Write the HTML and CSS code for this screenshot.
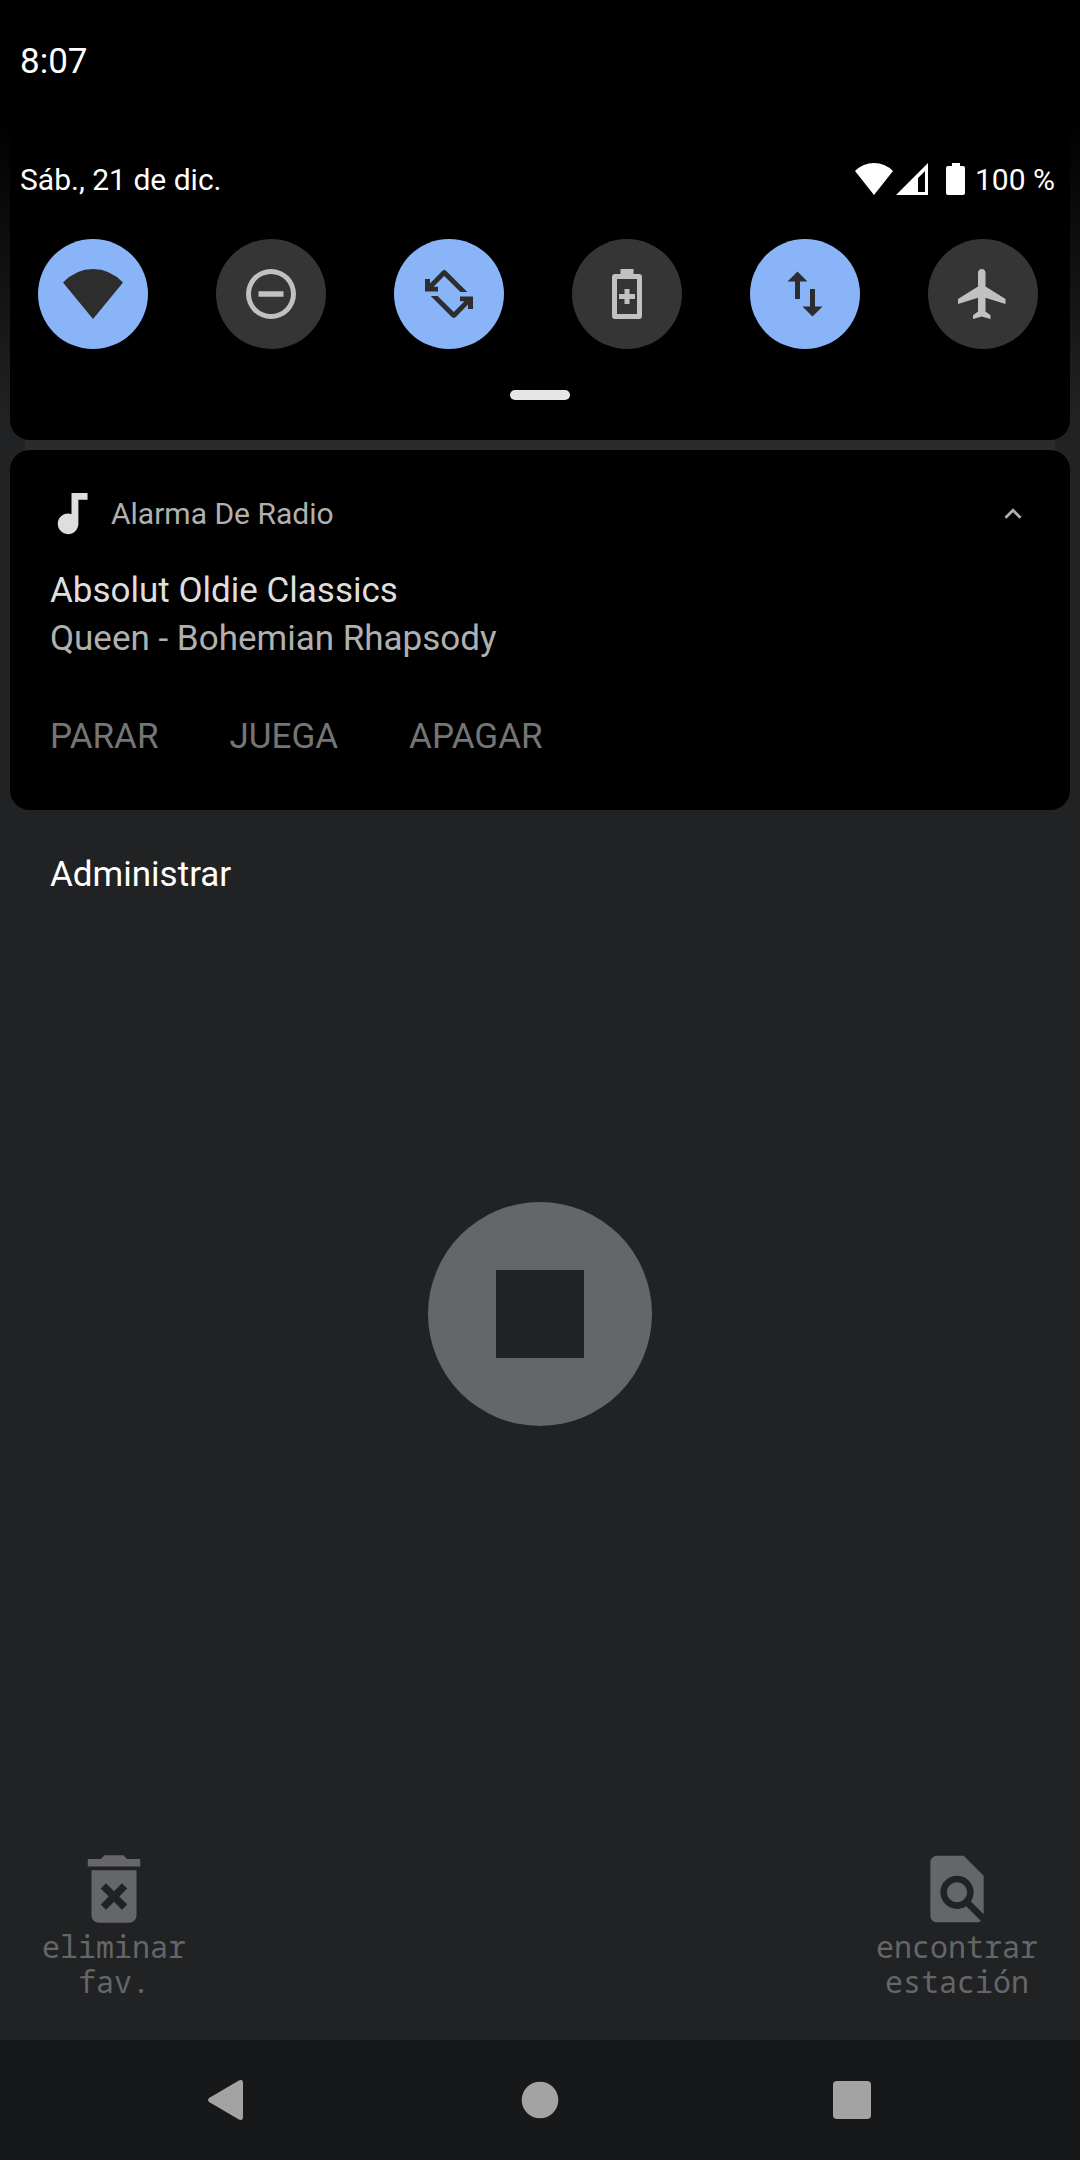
FILE: index.html
```html
<!DOCTYPE html>
<html lang="es">
<head>
<meta charset="utf-8">
<meta name="viewport" content="width=device-width, initial-scale=1">
<title>Alarma De Radio</title>
<link rel="stylesheet" href="styles.css">
</head>
<body>
<div class="screen">
  <header class="status-bar"><time class="clock">8:07</time></header>

  <section class="quick-settings" aria-label="Ajustes rápidos">
    <div class="quick-header">
      <time datetime="12-21">Sáb., 21 de dic.</time>
      <div class="system-icons">
        <svg class="status-wifi" viewBox="0 0 38 32" aria-hidden="true"><path d="M19 32 0 8Q8 0 19 0T38 8Z"/></svg>
        <svg class="status-signal" viewBox="0 0 32 32" aria-hidden="true"><path fill-rule="evenodd" d="M0 32 32 0V32ZM22 15V29H29V8Z"/></svg>
        <svg class="status-battery" viewBox="0 0 19 32" aria-hidden="true"><path d="M6 0h8v3h3q2 0 2 2v25q0 2-2 2H2q-2 0-2-2V5q0-2 2-2h4Z"/></svg>
        <span>100 %</span>
      </div>
    </div>
    <div class="tiles">
      <button class="tile tile-on" type="button" aria-label="Wi-Fi" aria-pressed="true">
        <svg viewBox="0 0 60 60"><path d="M30 55 0 18.500Q13 5 30 5T60 18.500Z"/></svg>
      </button>
      <button class="tile" type="button" aria-label="No molestar" aria-pressed="false">
        <svg viewBox="0 0 24 24"><path fill-rule="evenodd" d="M12 2a10 10 0 1 0 0 20 10 10 0 0 0 0-20Zm0 2a8 8 0 1 1 0 16 8 8 0 0 1 0-16ZM7 10.900h10v2.200H7Z"/></svg>
      </button>
      <button class="tile tile-on" type="button" aria-label="Girar automáticamente" aria-pressed="true">
        <svg viewBox="0 0 60 60"><path id="turn" d="M41.400 28 25.200 12 14.500 22.700H19V27.500H6V15H11V19.500L22.900 7.200Q25.200 5 27.500 7.200L48.300 28Z"/><use href="#turn" transform="rotate(180 30 30)"/></svg>
      </button>
      <button class="tile" type="button" aria-label="Ahorro de batería" aria-pressed="false">
        <svg viewBox="0 0 60 60"><path fill-rule="evenodd" d="M23.500 5h13v5H42q3 0 3 3v39q0 3-3 3H18q-3 0-3-3V13q0-3 3-3h5.500ZM20 15v35h20V15ZM27.500 25h5v5H38v5h-5.500v5h-5v-5H22v-5h5.500Z"/></svg>
      </button>
      <button class="tile tile-on" type="button" aria-label="Datos móviles" aria-pressed="true">
        <svg viewBox="0 0 60 60"><path d="M22.500 7.500 32.500 17.500H25V35H20V17.500H12.500ZM35 25h5v17.500h7.500l-10 10-10-10H35Z"/></svg>
      </button>
      <button class="tile" type="button" aria-label="Modo avión" aria-pressed="false">
        <svg viewBox="0 0 24 24"><path d="M21 16v-2l-8-5V3.500c0-.83-.67-1.500-1.500-1.500S10 2.670 10 3.500V9l-8 5v2l8-2.500V19l-2 1.500V22l3.500-1 3.500 1v-1.500L13 19v-5.500l8 2.500z"/></svg>
      </button>
    </div>
    <div class="handle"></div>
  </section>

  <div class="panel-gap"></div>

  <article class="notification">
    <div class="notification-header">
      <svg class="app-icon" viewBox="0 0 24 24" aria-hidden="true"><path d="M12 3v9.280c-.47-.17-.97-.28-1.500-.28C8.010 12 6 14.010 6 16.500S8.010 21 10.500 21c2.310 0 4.200-1.750 4.450-4H15V6h4V3h-7z"/></svg>
      <span class="app-name">Alarma De Radio</span>
      <button class="collapse" type="button" aria-label="Contraer">
        <svg viewBox="0 0 24 24"><path d="M12 8l-6 6 1.410 1.410L12 10.830l4.590 4.580L18 14z"/></svg>
      </button>
    </div>
    <h1 class="station">Absolut Oldie Classics</h1>
    <p class="song">Queen - Bohemian Rhapsody</p>
    <div class="actions">
      <button type="button">PARAR</button>
      <button type="button">JUEGA</button>
      <button type="button">APAGAR</button>
    </div>
  </article>

  <button class="manage" type="button">Administrar</button>

  <main class="player">
    <button class="stop" type="button" aria-label="Detener"><span class="stop-square"></span></button>
  </main>

  <div class="station-tools">
    <button class="tool" type="button">
      <svg class="icon-delete" viewBox="0 0 24 24" aria-hidden="true"><path fill-rule="evenodd" d="M6 19c0 1.100.9 2 2 2h8c1.100 0 2-.9 2-2V7H6v12zm2.460-7.120 1.410-1.410L12 12.590l2.120-2.120 1.410 1.410L13.410 14l2.120 2.120-1.410 1.410L12 15.410l-2.120 2.120-1.410-1.410L10.590 14l-2.130-2.120zM15.500 4l-1-1h-5l-1 1H5v2h14V4z"/></svg>
      <span>eliminar<br>fav.</span>
    </button>
    <button class="tool" type="button">
      <svg class="icon-find" viewBox="0 0 24 24" aria-hidden="true"><path d="M20 19.590V8l-6-6H6c-1.100 0-1.990.9-1.990 2L4 20c0 1.100.89 2 1.990 2H18c.45 0 .85-.15 1.190-.4l-4.430-4.430c-.8.520-1.740.830-2.760.830-2.760 0-5-2.240-5-5s2.240-5 5-5 5 2.240 5 5c0 1.020-.31 1.960-.83 2.750L20 19.590zM9 13c0 1.660 1.340 3 3 3s3-1.340 3-3-1.340-3-3-3-3 1.340-3 3z"/></svg>
      <span>encontrar<br>estación</span>
    </button>
  </div>

  <nav class="nav-bar" aria-label="Navegación">
    <button type="button" aria-label="Atrás"><svg viewBox="0 0 40 40"><path d="M1.500 17.800 30.500.700Q35-1.500 35 3V37Q35 41.500 30.500 39.300L1.500 22.200Q-1.500 20 1.500 17.800Z"/></svg></button>
    <button type="button" aria-label="Inicio"><svg viewBox="0 0 40 40"><circle cx="20" cy="20" r="18.300"/></svg></button>
    <button type="button" aria-label="Recientes"><svg viewBox="0 0 40 40"><rect x="1" y="1" width="38" height="38" rx="4"/></svg></button>
  </nav>
</div>
</body>
</html>
```

FILE: styles.css
```css
* {
  box-sizing: border-box;
}

body {
  margin: 0;
  background: #212224;
  color: #fff;
  font-family: Roboto, "Noto Sans", sans-serif;
  font-size: 35px;
  line-height: 48px;
}

button {
  padding: 0;
  border: 0;
  background: none;
  color: inherit;
  font: inherit;
  cursor: pointer;
}

svg {
  display: block;
  fill: currentColor;
}

.screen {
  display: flex;
  flex-direction: column;
  min-height: 100vh;
  background: linear-gradient(#000 120px, #212224 420px);
}

.status-bar {
  display: flex;
  align-items: center;
  height: 120px;
  padding: 4px 20px 0;
  background: #000;
}

/* Quick settings panel */

.quick-settings {
  margin: 0 10px;
  padding: 40px 0;
  border-radius: 0 0 20px 20px;
  background: #000;
}

.quick-header {
  display: flex;
  align-items: center;
  justify-content: space-between;
  height: 40px;
  padding: 0 15px 0 10px;
  font-size: 30px;
}

.system-icons {
  display: flex;
  align-items: center;
}

.status-wifi,
.status-signal,
.status-battery {
  height: 32px;
  margin-bottom: 2px;
}

.status-wifi {
  width: 38px;
  margin-right: 3px;
}

.status-signal {
  width: 32px;
  margin-right: 18px;
}

.status-battery {
  width: 19px;
  margin-right: 10px;
}

.tiles {
  display: flex;
  justify-content: space-between;
  margin-top: 39px;
  padding: 0 32px 0 28px;
}

.tile {
  display: grid;
  place-items: center;
  width: 110px;
  height: 110px;
  border-radius: 50%;
  background: #353535;
  color: #c1c1c1;
}

.tile-on {
  background: #8ab4f8;
  color: #2d2d2d;
}

.tile svg {
  width: 60px;
  height: 60px;
}

.handle {
  width: 60px;
  height: 10px;
  margin: 41px auto 0;
  border-radius: 5px;
  background: #e6e6e6;
}

.panel-gap {
  height: 10px;
  margin: 0 25px;
  background: #2a2b2d;
}

/* Notification */

.notification {
  margin: 0 10px;
  padding: 36px 40px 49px;
  border-radius: 20px;
  background: #000;
}

.notification-header {
  display: flex;
  align-items: center;
  color: #b0b0b0;
  font-size: 30px;
}

.app-icon {
  width: 55px;
  height: 55px;
  margin: 0 12px 0 -6px;
  color: #dedede;
}

.collapse {
  margin-left: auto;
}

.collapse svg {
  width: 34px;
  height: 34px;
}

.station,
.song {
  margin: 0;
  font-size: 35px;
  font-weight: 400;
}

.station {
  margin-top: 26px;
  color: #dedede;
}

.song {
  color: #b0b0b0;
}

.actions {
  display: flex;
  gap: 71px;
  margin-top: 50px;
  color: #757575;
}

.manage {
  align-self: flex-start;
  margin: 41px 50px 0;
}

/* Radio player behind the shade */

.player {
  display: grid;
  flex: 1;
  place-items: center;
  padding: 40px 0 155px;
}

.stop {
  display: grid;
  place-items: center;
  width: 224px;
  height: 224px;
  border-radius: 50%;
  background: #656668;
}

.stop-square {
  width: 88px;
  height: 88px;
  background: #212224;
}

.station-tools {
  display: flex;
  align-items: flex-end;
  justify-content: space-between;
  padding: 0 42px 41px;
}

.tool {
  display: flex;
  flex-direction: column;
  align-items: center;
  color: #656668;
  font-family: "Noto Sans Mono", "DejaVu Sans Mono", monospace;
  font-size: 30px;
  line-height: 35px;
}

.icon-delete {
  width: 90px;
  height: 90px;
  margin-bottom: -5px;
}

.icon-find {
  width: 80px;
  height: 80px;
}

.nav-bar {
  display: grid;
  grid-template-columns: repeat(3, 1fr);
  height: 120px;
  padding: 0 72px;
  background: #17181a;
  color: #a3a3a3;
}

.nav-bar button {
  display: grid;
  place-items: center;
}

.nav-bar svg {
  width: 40px;
  height: 40px;
}
```
